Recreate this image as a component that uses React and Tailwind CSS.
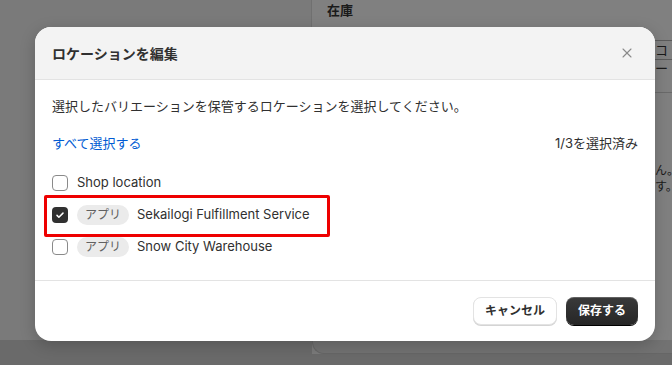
import { X } from 'lucide-react'

const FONT = "font-['Inter','Noto_Sans_CJK_JP',sans-serif]"

const locations = [
  { name: 'Shop location', app: false, checked: false },
  { name: 'Sekailogi Fulfillment Service', app: true, checked: true },
  { name: 'Snow City Warehouse', app: true, checked: false },
]

function Checkbox({ checked }) {
  if (checked) {
    return (
      <span className="w-4 h-4 rounded-[4px] bg-[#303030] flex items-center justify-center shrink-0">
        <svg viewBox="0 0 16 16" className="w-3 h-3" fill="none" stroke="white" strokeWidth="2" strokeLinecap="round" strokeLinejoin="round">
          <path d="M4 8.5l2.5 2.5L12 5.5" />
        </svg>
      </span>
    )
  }
  return <span className="w-4 h-4 rounded-[4px] border border-[#8a8a8a] bg-white shrink-0" />
}

export default function App() {
  return (
    <div className={`relative w-[672px] h-[365px] overflow-hidden bg-[#7a7a7a] ${FONT}`}>
      {/* dimmed page behind */}
      <div className="flex h-full">
        <div className="w-[312px] shrink-0 h-full bg-[#7a7a7a] border-r border-[#707070]" />
        <div className="flex-1 min-w-0 flex flex-col">
          <div className="h-[340px] bg-[#808080] pl-[15px] pt-[1px]">
            <div className="text-[13px] font-semibold text-[#1a1a1a]">在庫</div>
            <div className="mt-[19px] ml-[327px] h-[20px] border-y border-[#5a5a5a] text-[13px] leading-[18px] text-[#1a1a1a] pl-[1px]">コー</div>
            <div className="mt-[32px] ml-[327px] border-t border-[#6a6a6a]" />
            <div className="mt-[70px] ml-[328px] text-[12px] leading-[16px] text-[#1a1a1a]">
              <div>ん。</div>
              <div>す。</div>
            </div>
          </div>
          <div className="h-[14px] bg-[#727272] rounded-bl-[12px] border-b border-l border-[#666]" />
          <div className="flex-1 bg-[#6a6a6a]" />
        </div>
      </div>
      <div className="absolute left-0 bottom-0 w-[312px] h-[25px] bg-[#6a6a6a]" />

      {/* modal */}
      <div className="absolute left-[35px] top-[27px] w-[620px] rounded-[16px] bg-white overflow-hidden shadow-[0_4px_16px_rgba(0,0,0,0.2)]">
        <div className="h-[53px] bg-[#f3f3f3] border-b border-[#e3e3e3] flex items-center justify-between pl-[17px] pr-[20px]">
          <span className="text-[14px] font-bold text-[#303030]">ロケーションを編集</span>
          <X className="w-[16px] h-[16px] text-[#8a8a8a]" strokeWidth={1.6} />
        </div>
        <div className="px-[17px] pt-[16px] pb-[23px] border-b border-[#e3e3e3]">
          <p className="text-[13px] text-[#303030] leading-[20px]">選択したバリエーションを保管するロケーションを選択してください。</p>
          <div className="mt-[17px] flex items-center justify-between text-[13px] leading-[20px]">
            <span className="text-[#005bd3]">すべて選択する</span>
            <span className="text-[#303030]">1/3を選択済み</span>
          </div>
          <div className="mt-[20px] flex flex-col gap-[12px]">
            {locations.map((l) => (
              <div key={l.name} className="flex items-center h-[20px] text-[13px] text-[#303030]">
                <Checkbox checked={l.checked} />
                {l.app && (
                  <span className="ml-[9px] h-[20px] px-[8px] rounded-full bg-[#ebebeb] text-[12px] text-[#616161] flex items-center">アプリ</span>
                )}
                <span className={l.app ? 'ml-[8px]' : 'ml-[9px]'}>{l.name}</span>
              </div>
            ))}
          </div>
        </div>
        <div className="h-[60px] flex items-center justify-end gap-[9px] pr-[17px]">
          <button className="h-[28px] px-[11px] rounded-[8px] bg-white border border-[#e3e3e3] shadow-[0_1px_0_#d4d4d4] text-[12px] font-semibold text-[#303030]">キャンセル</button>
          <button className="h-[28px] px-[12px] rounded-[8px] bg-gradient-to-b from-[#3a3a3a] to-[#262626] shadow-[0_1px_0_#000,inset_0_1px_0_rgba(255,255,255,0.2)] text-[12px] font-semibold text-white">保存する</button>
        </div>
      </div>

      {/* annotation highlight */}
      <div className="absolute left-[44px] top-[195px] w-[286px] h-[42px] border-[3px] border-[#ee0000] rounded-[2px]" />
    </div>
  )
}
